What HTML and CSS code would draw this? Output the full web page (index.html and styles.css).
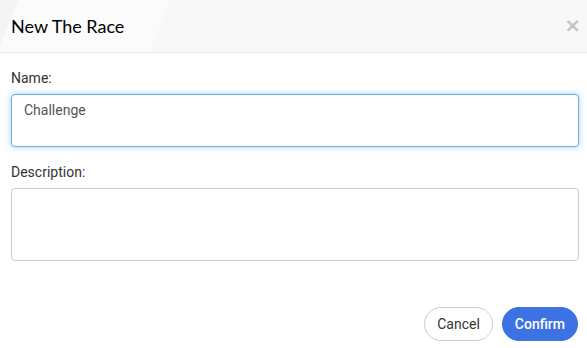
FILE: index.html
```html
<!DOCTYPE html>
<html>
<head>
	<meta charset="utf-8">
	<title>New The Race</title>
	<link rel="stylesheet" href="styles.css">
</head>
<body>
	<div class="modal">
		<div class="modal-header">
			<h4>New The Race</h4>
			<span class="close">&times;</span>
		</div>
		<form class="modal-body">
			<div class="group">
				<label for="name">Name:</label>
				<textarea id="name" class="focus" rows="2">Challenge</textarea>
			</div>
			<div class="group">
				<label for="desc">Description:</label>
				<textarea id="desc" class="tall" rows="3"></textarea>
			</div>
		</form>
		<div class="modal-footer">
			<button class="btn">Cancel</button>
			<button class="btn primary">Confirm</button>
		</div>
	</div>
</body>
</html>
```

FILE: styles.css
```css
html, body {
	margin: 0;
	padding: 0;
	background: #fff;
	font-family: Roboto, "Liberation Sans", sans-serif;
}

.modal {
	width: 587px;
	height: 348px;
	display: flex;
	flex-flow: column;
}

.modal-header {
	height: 52px;
	padding: 0 11px;
	display: flex;
	align-items: center;
	justify-content: space-between;
	border-bottom: 1px solid #e8e8e8;
	background: linear-gradient(112deg, #f4f4f4 0 3%, #fbfbfb 3% 28%, #f8f8f8 28% 100%);
}

.modal-header h4 {
	margin: 0;
	font-family: Lato, "Liberation Sans", sans-serif;
	font-weight: 400;
	font-size: 18px;
	color: #000;
}

.close {
	font-family: "DejaVu Sans", sans-serif;
	font-size: 20px;
	font-weight: 700;
	color: #c4c4c4;
	margin-right: -5px;
	margin-top: -3px;
}

.modal-body {
	padding: 16px 8px 0 11px;
	margin: 0;
}

.group {
	display: flex;
	flex-flow: column;
	margin-bottom: 16px;
}

label {
	font-size: 14px;
	color: #333;
	line-height: 18px;
	margin-bottom: 7px;
}

textarea {
	box-sizing: border-box;
	width: 568px;
	height: 53px;
	padding: 7px 12px;
	font-family: Roboto, "Liberation Sans", sans-serif;
	font-size: 14px;
	color: #555;
	border: 1px solid #ccc;
	border-radius: 4px;
	resize: none;
	outline: none;
}

textarea.focus {
	border-color: #66afe9;
	box-shadow: 0 0 6px rgba(102, 175, 233, 0.6);
}

textarea.tall {
	height: 73px;
}

.modal-footer {
	margin-top: auto;
	padding: 0 9px 7px 0;
	display: flex;
	justify-content: flex-end;
	gap: 9px;
}

.btn {
	height: 34px;
	padding: 0 12px;
	border-radius: 17px;
	border: 1px solid #ccc;
	background: #fff;
	color: #333;
	font-family: Roboto, "Liberation Sans", sans-serif;
	font-size: 14px;
}

.primary {
	background: #3d72e4;
	border-color: #3d72e4;
	color: #fff;
	font-weight: 500;
}
```
